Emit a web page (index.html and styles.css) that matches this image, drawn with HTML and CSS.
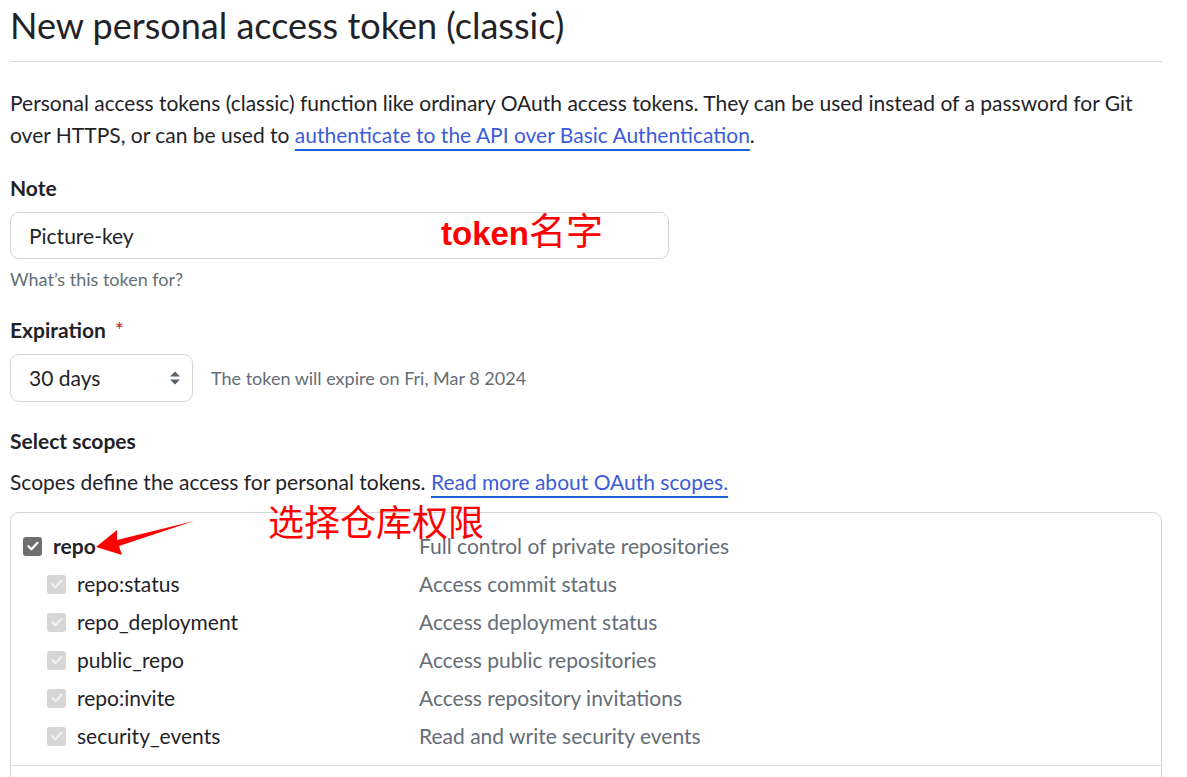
FILE: index.html
```html
<!DOCTYPE html>
<html lang="en">
<head>
<meta charset="utf-8">
<title>New personal access token (classic)</title>
<link rel="stylesheet" href="styles.css">
</head>
<body>
<div class="page">
  <div class="subhead"><h1 class="subhead-title">New personal access token (classic)</h1></div>
  <p class="intro">Personal access tokens (classic) function like ordinary OAuth access tokens. They can be used instead of a password for Git over HTTPS, or can be used to <a href="#" class="link">authenticate to the API over Basic Authentication</a>.</p>

  <div class="field">
    <label class="label" for="note">Note</label>
    <input id="note" class="input" type="text" value="Picture-key">
    <p class="hint">What’s this token for?</p>
  </div>

  <div class="field">
    <div class="label">Expiration <span class="req">*</span></div>
    <div class="select-row">
      <div class="select">
        <span>30 days</span>
        <svg class="select-icon" width="12" height="18" viewBox="0 0 12 18"><path d="M1 7.5 6 2.5 11 7.5Z M1 10.5 6 15.5 11 10.5Z" fill="#59636e"/></svg>
      </div>
      <span class="select-note">The token will expire on Fri, Mar 8 2024</span>
    </div>
  </div>

  <div class="field">
    <div class="label label-scopes">Select scopes</div>
    <p class="scopes-desc">Scopes define the access for personal tokens. <a href="#" class="link">Read more about OAuth scopes.</a></p>
  </div>

  <div class="scopes-box">
    <div class="scope-group">
      <div class="scope-row">
        <div class="scope-name">
          <span class="cb cb-on"><svg width="12" height="10" viewBox="0 0 12 10"><path d="M1.5 5.2 4.5 8.2 10.5 1.8" fill="none" stroke="#fff" stroke-width="2.2" stroke-linecap="round" stroke-linejoin="round"/></svg></span>
          <strong class="scope-main">repo</strong>
        </div>
        <div class="scope-desc">Full control of private repositories</div>
      </div>
      <div class="scope-row sub">
        <div class="scope-name"><span class="cb cb-dis"><svg width="12" height="10" viewBox="0 0 12 10"><path d="M1.5 5.2 4.5 8.2 10.5 1.8" fill="none" stroke="#f1f1f1" stroke-width="2.2" stroke-linecap="round" stroke-linejoin="round"/></svg></span>repo:status</div>
        <div class="scope-desc">Access commit status</div>
      </div>
      <div class="scope-row sub">
        <div class="scope-name"><span class="cb cb-dis"><svg width="12" height="10" viewBox="0 0 12 10"><path d="M1.5 5.2 4.5 8.2 10.5 1.8" fill="none" stroke="#f1f1f1" stroke-width="2.2" stroke-linecap="round" stroke-linejoin="round"/></svg></span>repo_deployment</div>
        <div class="scope-desc">Access deployment status</div>
      </div>
      <div class="scope-row sub">
        <div class="scope-name"><span class="cb cb-dis"><svg width="12" height="10" viewBox="0 0 12 10"><path d="M1.5 5.2 4.5 8.2 10.5 1.8" fill="none" stroke="#f1f1f1" stroke-width="2.2" stroke-linecap="round" stroke-linejoin="round"/></svg></span>public_repo</div>
        <div class="scope-desc">Access public repositories</div>
      </div>
      <div class="scope-row sub">
        <div class="scope-name"><span class="cb cb-dis"><svg width="12" height="10" viewBox="0 0 12 10"><path d="M1.5 5.2 4.5 8.2 10.5 1.8" fill="none" stroke="#f1f1f1" stroke-width="2.2" stroke-linecap="round" stroke-linejoin="round"/></svg></span>repo:invite</div>
        <div class="scope-desc">Access repository invitations</div>
      </div>
      <div class="scope-row sub">
        <div class="scope-name"><span class="cb cb-dis"><svg width="12" height="10" viewBox="0 0 12 10"><path d="M1.5 5.2 4.5 8.2 10.5 1.8" fill="none" stroke="#f1f1f1" stroke-width="2.2" stroke-linecap="round" stroke-linejoin="round"/></svg></span>security_events</div>
        <div class="scope-desc">Read and write security events</div>
      </div>
    </div>
    <div class="scope-group scope-group-next"></div>
  </div>

  <span class="anno anno-note"><b class="anno-latin">token</b>名字</span>
  <span class="anno anno-scope">选择仓库权限</span>
  <svg class="anno-arrow" width="1187" height="777" viewBox="0 0 1187 777"><polygon points="96,547 117,530 117,540 194,521 119,546 122,555" fill="#ff0000"/></svg>
</div>
</body>
</html>
```
FILE: styles.css
```css
* { box-sizing: border-box; }

body {
  margin: 0;
  background: #ffffff;
  color: #1f2328;
  font-family: Lato, "Noto Sans", "Noto Sans CJK SC", sans-serif;
  font-size: 21px;
  line-height: 32px;
}

.page {
  position: relative;
  width: 1152px;
  margin-left: 10px;
}

.subhead {
  border-bottom: 1px solid #d8dee4;
  padding-bottom: 11px;
}

.subhead-title {
  margin: 0;
  font-size: 36px;
  font-weight: 400;
  line-height: 50px;
}

.intro {
  margin: 25px 0 0;
}

.link {
  color: #3d5bd9;
  text-decoration: underline;
  text-decoration-color: #1f5fd6;
  text-decoration-thickness: 2px;
  text-underline-offset: 6px;
}

.label {
  display: block;
  margin-top: 21px;
  font-weight: 700;
}

.req {
  color: #cf222e;
  font-weight: 400;
  margin-left: 4px;
}

.input {
  display: block;
  width: 659px;
  height: 47px;
  margin-top: 8px;
  padding: 0 18px;
  border: 1px solid #d0d7de;
  border-radius: 9px;
  background: #ffffff;
  color: #1f2328;
  font-family: inherit;
  font-size: 21px;
}

.hint {
  margin: 7px 0 0;
  font-size: 18px;
  line-height: 27px;
  color: #656d76;
}

.select-row {
  display: flex;
  align-items: center;
  gap: 18px;
  margin-top: 8px;
}

.select {
  display: flex;
  align-items: center;
  justify-content: space-between;
  width: 183px;
  height: 48px;
  padding: 0 11px 0 18px;
  border: 1px solid #d0d7de;
  border-radius: 9px;
  background: #ffffff;
}

.select-note {
  font-size: 18px;
  color: #656d76;
}

.label-scopes {
  margin-top: 23px;
}

.scopes-desc {
  margin: 9px 0 0;
}

.scopes-box {
  margin-top: 14px;
  border: 1px solid #d0d7de;
  border-radius: 9px;
}

.scope-group {
  padding: 14px 0 10px 12px;
  border-bottom: 1px solid #d8dee4;
}

.scope-group-next {
  height: 60px;
  border-bottom: 0;
}

.scope-row {
  display: grid;
  grid-template-columns: 396px 1fr;
  align-items: center;
  height: 38px;
}

.scope-name {
  display: flex;
  align-items: center;
  gap: 11px;
}

.sub .scope-name {
  padding-left: 24px;
}

.scope-main {
  font-weight: 700;
}

.scope-desc {
  color: #656d76;
}

.cb {
  display: inline-flex;
  align-items: center;
  justify-content: center;
  width: 19px;
  height: 19px;
  border-radius: 3px;
  flex: none;
}

.cb-on { background: #6f6f6f; }
.cb-dis { background: #d6d6d6; }

.anno {
  position: absolute;
  color: #ff0000;
  font-family: "Noto Sans CJK SC", sans-serif;
  font-size: 37px;
  line-height: 36px;
  white-space: nowrap;
}

.anno-latin {
  font-family: "Liberation Sans", Arial, sans-serif;
  font-weight: 700;
  font-size: 33px;
}

.anno-note {
  left: 431px;
  top: 211px;
}

.anno-scope {
  left: 258px;
  top: 502px;
  font-size: 36px;
}

.anno-arrow {
  position: absolute;
  left: -10px;
  top: 0;
  pointer-events: none;
}
```
